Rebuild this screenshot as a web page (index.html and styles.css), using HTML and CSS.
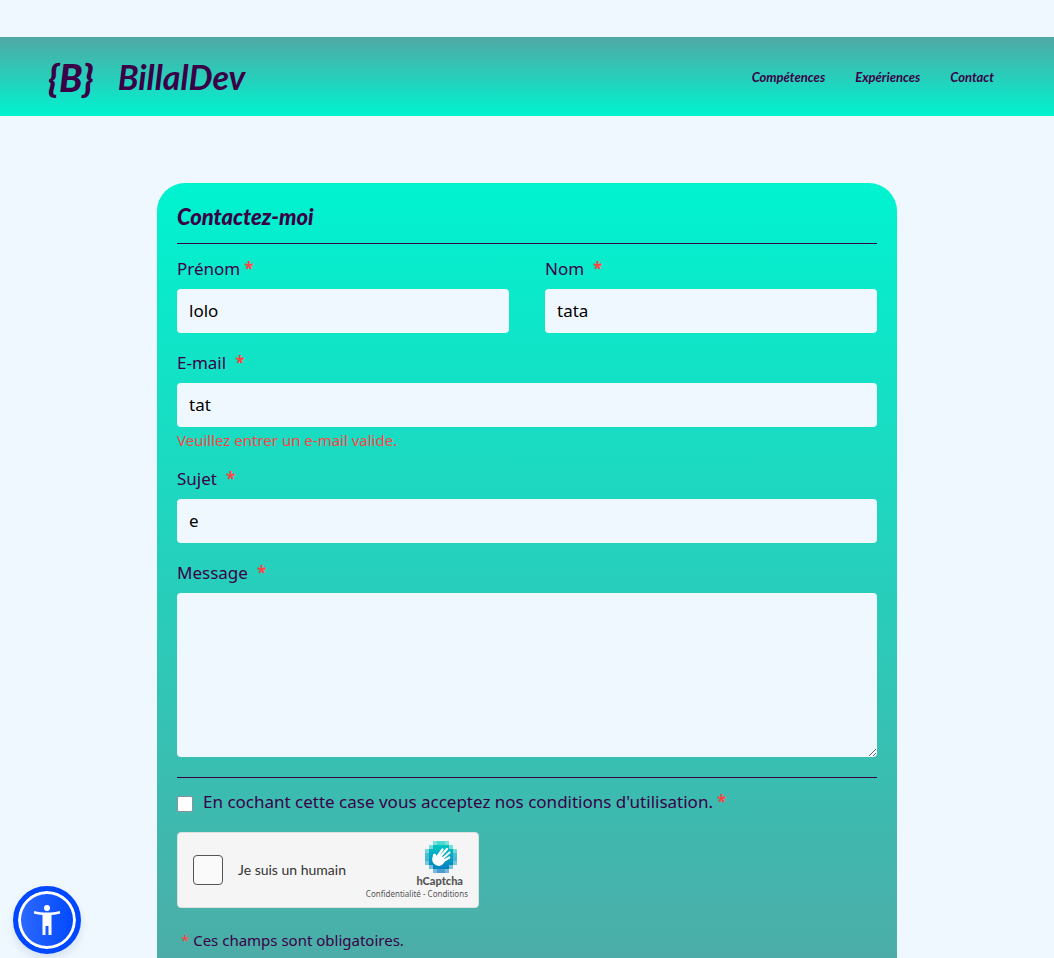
FILE: index.html
```html
<!DOCTYPE html>
<html lang="fr">
<head>
<meta charset="utf-8">
<meta name="viewport" content="width=device-width, initial-scale=1">
<title>BillalDev - Contact</title>
<link rel="stylesheet" href="styles.css">
</head>
<body>
<header class="site-header">
  <a class="brand" href="#"><span class="brand-mark">{B}</span><span class="brand-name">BillalDev</span></a>
  <nav class="site-nav">
    <a href="#competences">Compétences</a>
    <a href="#experiences">Expériences</a>
    <a href="#contact">Contact</a>
  </nav>
</header>
<main class="page">
  <form class="card" id="contact" novalidate>
    <h1 class="card-title">Contactez-moi</h1>
    <div class="fields">
      <div class="row">
        <div class="field">
          <label class="label tight" for="firstname">Prénom<span class="star">*</span></label>
          <input class="control" id="firstname" type="text" value="lolo">
        </div>
        <div class="field">
          <label class="label" for="lastname">Nom<span class="star">*</span></label>
          <input class="control" id="lastname" type="text" value="tata">
        </div>
      </div>
      <div class="field">
        <label class="label" for="email">E-mail<span class="star">*</span></label>
        <input class="control" id="email" type="email" value="tat" aria-describedby="email-error">
        <p class="error" id="email-error">Veuillez entrer un e-mail valide.</p>
      </div>
      <div class="field">
        <label class="label" for="subject">Sujet<span class="star">*</span></label>
        <input class="control" id="subject" type="text" value="e">
      </div>
      <div class="field">
        <label class="label" for="message">Message<span class="star">*</span></label>
        <textarea class="control message" id="message"></textarea>
      </div>
    </div>
    <div class="consent">
      <input class="consent-box" id="consent" type="checkbox">
      <label class="label tight" for="consent">En cochant cette case vous acceptez nos conditions d'utilisation.<span class="star">*</span></label>
    </div>
    <div class="captcha">
      <input class="captcha-box" id="human" type="checkbox">
      <label class="captcha-label" for="human">Je suis un humain</label>
      <div class="captcha-brand">
        <svg class="captcha-logo" viewBox="0 0 32 32" width="32" height="32" aria-hidden="true">
          <defs>
            <linearGradient id="tiles" gradientUnits="userSpaceOnUse" x1="0" y1="0" x2="0" y2="32">
              <stop offset="0" stop-color="#00d4bf"/>
              <stop offset=".5" stop-color="#00a3c4"/>
              <stop offset="1" stop-color="#0075bf"/>
            </linearGradient>
          </defs>
          <g shape-rendering="crispEdges" fill="url(#tiles)">
            <path opacity=".5" d="M8 0h16v4h4v4h4v16h-4v4h-4v4H8v-4H4v-4H0V8h4V4h4z"/>
            <path opacity=".4" d="M12 0h8v4h4v4h4v4h4v8h-4v4h-4v4h-4v4h-8v-4H8v-4H4v-4H0v-8h4V8h4V4h4z"/>
            <path d="M8 4h16v4h4v16h-4v4H8v-4H4V8h4z"/>
          </g>
          <path fill="none" stroke="#fff" stroke-width="2.200" stroke-linecap="round" d="M12 16l5.500-7.500M14 17l8-9M16 19l8.500-7.500M17 21l7.300-4.500M10 19l-1-5"/>
          <path fill="#fff" d="M8 14.500c.2-2 2.600-2.300 3.100-.5l.7 1.800 3.200-2.600 5.500 5.600-1.500 3c-2 3.400-6 4-9 1.800-3.500-2.600-3-6-2-9.100z"/>
        </svg>
        <span class="captcha-name">hCaptcha</span>
        <span class="captcha-links"><a href="#">Confidentialité</a> - <a href="#">Conditions</a></span>
      </div>
    </div>
    <p class="note"><span class="note-star">*</span> Ces champs sont obligatoires.</p>
  </form>
</main>
<button class="a11y" type="button" aria-label="Accessibilité">
  <svg viewBox="0 0 32 36" width="32" height="36" fill="#fff" aria-hidden="true">
    <circle cx="16" cy="6" r="3"/>
    <path d="M3.300 9C11 11 21 11 28.700 9l.5 2.500c-2.800.8-5.800 1.400-8.700 1.600V33h-3v-9h-3v9h-3V13.100c-2.900-.2-5.900-.8-8.700-1.600z"/>
  </svg>
</button>
</body>
</html>
```
FILE: styles.css
```css
* {
  box-sizing: border-box;
}

html {
  scrollbar-width: none;
}

body {
  margin: 0;
  padding-top: 37px;
  background: #f0f8ff;
  color: #3a0147;
  font-family: "Noto Sans", sans-serif;
  font-size: 16px;
  line-height: 20px;
}

a {
  color: inherit;
  text-decoration: none;
}

.site-header {
  display: flex;
  align-items: center;
  justify-content: space-between;
  padding: 16px 60px 15px 48px;
  background: linear-gradient(#51a8a5, #00f3d0);
  font-family: Lato, sans-serif;
  font-style: italic;
}

.brand {
  display: flex;
  align-items: center;
  gap: 24px;
  line-height: 48px;
}

.brand-mark {
  font-size: 38px;
  font-weight: 900;
}

.brand-name {
  font-size: 34px;
  font-weight: 700;
}

.site-nav {
  display: flex;
  gap: 30px;
  font-size: 13px;
  font-weight: 700;
}

.page {
  padding: 67px 20px 40px;
}

.card {
  max-width: 740px;
  margin: 0 auto;
  padding: 20px 20px 60px;
  border-radius: 28px;
  background: linear-gradient(#00f3d0, #51a8a5);
}

.card-title {
  margin: 0;
  padding-bottom: 12px;
  border-bottom: 1px solid #3a0147;
  font-family: Lato, sans-serif;
  font-size: 22px;
  font-style: italic;
  font-weight: 900;
  line-height: 28px;
}

.fields {
  display: flex;
  flex-direction: column;
  gap: 20px;
  padding: 15px 0 20px;
  border-bottom: 1px solid #3a0147;
}

.row {
  display: grid;
  grid-template-columns: 1fr 1fr;
  gap: 36px;
}

.field {
  display: flex;
  flex-direction: column;
}

.label {
  font-size: 17px;
}

.field .label {
  margin-bottom: 10px;
}

.star {
  margin-left: 9px;
  color: #ff4343;
  font-weight: 700;
}

.tight .star {
  margin-left: 4px;
}

.control {
  width: 100%;
  height: 44px;
  padding: 0 12px 2px;
  border: 0;
  border-radius: 4px;
  background: #f0f8ff;
  color: #000;
  font-family: inherit;
  font-size: 17px;
}

.message {
  height: 164px;
  padding: 12px;
  resize: vertical;
}

.error {
  margin: 4px 0 0;
  color: #ff4343;
  font-size: 15px;
  line-height: 18px;
}

.consent {
  display: flex;
  align-items: center;
  gap: 10px;
  padding: 14px 0 20px;
}

.consent-box {
  flex: none;
  appearance: none;
  width: 16px;
  height: 16px;
  margin: 3px 0 0;
  border: 1px solid #8f8f9d;
  border-radius: 2px;
  background: #fff;
}

.consent-box:checked,
.captcha-box:checked {
  background: #0048ff;
}

.captcha {
  display: flex;
  align-items: center;
  max-width: 302px;
  height: 76px;
  padding: 0 10px 0 15px;
  border: 1px solid #e0e0e0;
  border-radius: 4px;
  background: #f5f5f5;
  color: #333;
}

.captcha-box {
  appearance: none;
  width: 30px;
  height: 30px;
  margin: 0 15px 0 0;
  border: 1px solid #555;
  border-radius: 4px;
  background: #fafafa;
}

.captcha-label {
  font-family: Lato, sans-serif;
  font-size: 14px;
  white-space: nowrap;
}

.captcha-brand {
  display: flex;
  flex-direction: column;
  align-items: flex-end;
  margin-left: auto;
  color: #555;
  white-space: nowrap;
}

.captcha-logo {
  margin-right: 11px;
}

.captcha-name {
  margin-right: 5px;
  font-family: Lato, sans-serif;
  font-size: 11px;
  font-weight: 900;
  line-height: 16px;
}

.captcha-links {
  font-size: 8px;
  line-height: 10px;
}

.note {
  margin: 22px 0 0;
  padding-left: 4px;
  font-size: 15px;
}

.note-star {
  color: #ff4343;
}

.a11y {
  position: fixed;
  bottom: 4px;
  left: 13px;
  display: flex;
  align-items: center;
  justify-content: center;
  width: 68px;
  height: 68px;
  padding: 0;
  border: 5px solid #0048ff;
  border-radius: 50%;
  background: linear-gradient(90deg, #2e6aff, #0048ff);
  box-shadow: inset 0 0 0 3px #fff, 0 5px 10px rgba(0, 72, 140, 0.12);
}
```
